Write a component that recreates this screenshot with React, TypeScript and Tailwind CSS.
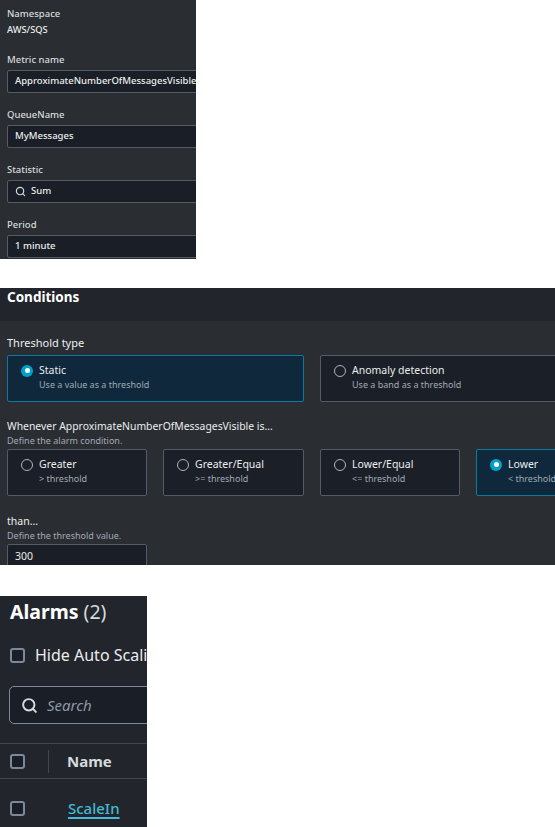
import { Search } from "lucide-react";

const font = "font-['Noto_Sans','Open_Sans',sans-serif]";

function Field({ label, value, icon }: { label: string; value: string; icon?: boolean }) {
    return (
        <div className="flex flex-col">
            <span className="text-[9.5px] leading-[14px] font-medium text-[#d5dbdb]">{label}</span>
            <div className="mt-[3px] h-[23px] w-[230px] rounded-[2px] border border-[#545b64] bg-[#1a1f27] pl-[7px] flex items-center gap-[5px]">
                {icon && <Search size={11} strokeWidth={2.5} className="text-[#d5dbdb]" />}
                <span className="text-[9.5px] font-medium text-[#eaeded] whitespace-nowrap">{value}</span>
            </div>
        </div>
    )
}

function Radio({ checked }: { checked?: boolean }) {
    if (checked) {
        return (
            <span className="w-[12px] h-[12px] rounded-full bg-[#00a1c9] flex items-center justify-center shrink-0">
                <span className="w-[5px] h-[5px] rounded-full bg-white" />
            </span>
        )
    }
    return <span className="w-[12px] h-[12px] rounded-full border border-[#aab7b8] shrink-0" />
}

function Tile({ title, sub, checked, width }: { title: string; sub: string; checked?: boolean; width: string }) {
    return (
        <div className={`${width} shrink-0 h-[47px] rounded-[2px] border pl-[13px] pt-[7px] ${checked ? 'border-[#0a7aa3] bg-[#0f283b]' : 'border-[#545b64] bg-[#1b1f27]'}`}>
            <div className="flex items-center gap-[6px]">
                <Radio checked={checked} />
                <span className="text-[10.5px] leading-[15px] text-[#eaeded]">{title}</span>
            </div>
            <div className="pl-[18px] text-[9px] leading-[14px] text-[#a1aab3] whitespace-nowrap">{sub}</div>
        </div>
    )
}

function Checkbox() {
    return <span className="w-[15px] h-[15px] rounded-[3px] border-2 border-[#7d8998] bg-[#1a1f27] shrink-0" />
}

export default function App() {
    return (
        <div className={`${font} bg-white w-[555px] h-[827px] overflow-hidden flex flex-col`}>
            {/* metric panel */}
            <div className="w-[196px] h-[259px] bg-[#2a2e33] overflow-hidden pl-[7px] pt-[7px] flex flex-col gap-[15px]">
                <div className="flex flex-col gap-[2px] mb-[1px]">
                    <span className="text-[9.5px] leading-[14px] font-medium text-[#d5dbdb]">Namespace</span>
                    <span className="text-[9.3px] leading-[14px] font-medium text-[#eaeded]">AWS/SQS</span>
                </div>
                <Field label="Metric name" value="ApproximateNumberOfMessagesVisible" />
                <Field label="QueueName" value="MyMessages" />
                <Field label="Statistic" value="Sum" icon />
                <Field label="Period" value="1 minute" />
            </div>

            {/* conditions panel */}
            <div className="mt-[29px] w-[555px] h-[277px] overflow-hidden flex flex-col">
                <div className="h-[33px] bg-[#22262c] pl-[7px] shrink-0">
                    <span className="block text-[13.5px] leading-[16px] pt-[1px] font-bold text-white">Conditions</span>
                </div>
                <div className="flex-1 bg-[#2a2e33] pl-[7px] pt-[14px]">
                    <div className="text-[11px] leading-[16px] text-[#eaeded]">Threshold type</div>
                    <div className="flex gap-[16px] mt-[4px]">
                        <Tile width="w-[297px]" title="Static" sub="Use a value as a threshold" checked />
                        <Tile width="w-[297px]" title="Anomaly detection" sub="Use a band as a threshold" />
                    </div>
                    <div className="mt-[17px] text-[10.4px] leading-[15px] text-[#eaeded] whitespace-nowrap">Whenever ApproximateNumberOfMessagesVisible is...</div>
                    <div className="text-[9px] leading-[13px] text-[#a1aab3]">Define the alarm condition.</div>
                    <div className="flex gap-[16px] mt-[2px]">
                        <Tile width="w-[140px]" title="Greater" sub="> threshold" />
                        <Tile width="w-[141px]" title="Greater/Equal" sub=">= threshold" />
                        <Tile width="w-[140px]" title="Lower/Equal" sub="<= threshold" />
                        <Tile width="w-[141px]" title="Lower" sub="< threshold" checked />
                    </div>
                    <div className="mt-[18px] text-[10.5px] leading-[15px] text-[#eaeded]">than...</div>
                    <div className="text-[9px] leading-[13px] text-[#a1aab3]">Define the threshold value.</div>
                    <div className="mt-[2px] w-[140px] h-[26px] rounded-[2px] border border-[#545b64] bg-[#1a1f27] pl-[7px] pt-[4px] text-[10.5px] text-[#eaeded]">300</div>
                </div>
            </div>

            {/* alarms panel */}
            <div className="mt-[31px] w-[147px] h-[231px] bg-[#22262c] overflow-hidden flex flex-col">
                <div className="pl-[10px] pt-[3px] text-[19.5px] leading-[26px] text-white whitespace-nowrap">
                    <span className="font-bold">Alarms</span> <span className="text-[#d5dbdb]">(2)</span>
                </div>
                <div className="flex items-center gap-[10px] pl-[10px] mt-[20px] whitespace-nowrap">
                    <Checkbox />
                    <span className="text-[16px] leading-[20px] text-[#eaeded]">Hide Auto Scaling alarms</span>
                </div>
                <div className="ml-[9px] mt-[21px] w-[200px] h-[38px] shrink-0 rounded-[5px] border border-[#7d8998] bg-[#1a1f27] flex items-center pl-[11px] gap-[9px]">
                    <Search size={17} strokeWidth={2.75} className="text-[#d5dbdb]" />
                    <span className="text-[15px] italic text-[#8d99a8]">Search</span>
                </div>
                <div className="mt-[19px] border-t border-[#414750] h-[35px] shrink-0 flex items-center pl-[10px]">
                    <Checkbox />
                    <span className="ml-[23px] w-px h-[23px] bg-[#414750]" />
                    <span className="ml-[18px] text-[15px] font-bold text-[#d5dbdb]">Name</span>
                </div>
                <div className="border-t border-[#414750] h-[60px] shrink-0 flex items-center pl-[10px]">
                    <Checkbox />
                    <span className="ml-[43px] text-[15px] font-medium text-[#44b9d6] underline underline-offset-[3px] decoration-2">ScaleIn</span>
                </div>
            </div>
        </div>
    )
}
